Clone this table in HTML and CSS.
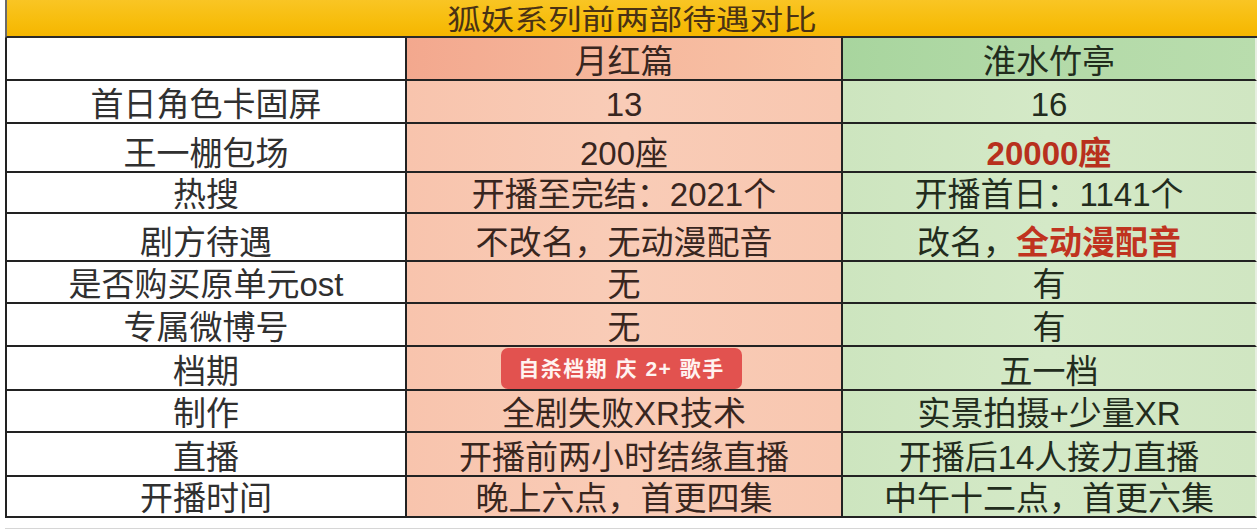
FILE: index.html
```html
<!DOCTYPE html>
<html lang="zh-CN">
<head>
<meta charset="utf-8">
<title>狐妖系列前两部待遇对比</title>
<link rel="stylesheet" href="styles.css">
</head>
<body>
<div class="sheet">
  <div class="title"><span class="title-text">狐妖系列前两部待遇对比</span></div>
  <div class="grid">
    <div class="cell label split-cell"><span class="split-a"></span><span class="split-b"></span></div>
    <div class="cell pink head">月红篇</div>
    <div class="cell green head">淮水竹亭</div>

    <div class="cell label">首日角色卡固屏</div>
    <div class="cell pink">13</div>
    <div class="cell green">16</div>

    <div class="cell label">王一棚包场</div>
    <div class="cell pink">200座</div>
    <div class="cell green"><span class="red bold">20000座</span></div>

    <div class="cell label">热搜</div>
    <div class="cell pink">开播至完结：2021个</div>
    <div class="cell green">开播首日：1141个</div>

    <div class="cell label">剧方待遇</div>
    <div class="cell pink">不改名，无动漫配音</div>
    <div class="cell green">改名，<span class="red semi">全动漫配音</span></div>

    <div class="cell label">是否购买原单元ost</div>
    <div class="cell pink">无</div>
    <div class="cell green">有</div>

    <div class="cell label">专属微博号</div>
    <div class="cell pink">无</div>
    <div class="cell green">有</div>

    <div class="cell label">档期</div>
    <div class="cell pink badge-cell"><span class="badge">自杀档期 庆 2+ 歌手</span></div>
    <div class="cell green">五一档</div>

    <div class="cell label">制作</div>
    <div class="cell pink">全剧失败XR技术</div>
    <div class="cell green">实景拍摄+少量XR</div>

    <div class="cell label">直播</div>
    <div class="cell pink">开播前两小时结缘直播</div>
    <div class="cell green">开播后14人接力直播</div>

    <div class="cell label">开播时间</div>
    <div class="cell pink">晚上六点，首更四集</div>
    <div class="cell green">中午十二点，首更六集</div>
  </div>
  <div class="below"></div>
</div>
</body>
</html>
```
FILE: styles.css
```css
* { box-sizing: border-box; }
html, body { margin: 0; padding: 0; background: #ffffff; }
body {
  width: 1258px;
  height: 529px;
  overflow: hidden;
  font-family: "Liberation Sans", "Noto Sans CJK SC", sans-serif;
  color: #2e2e2e;
}
.sheet {
  margin-left: 5px;
  width: 1252px;
}
.title {
  height: 38px;
  border-left: 2px solid #6a6a6a;
  border-bottom: 2px solid #2a2a2a;
  background: linear-gradient(180deg, #f9c524 0%, #f7bd0c 60%, #f5b600 100%);
  display: flex;
  justify-content: center;
  align-items: flex-end;
  overflow: hidden;
}
.title-text {
  display: inline-block;
  font-size: 28px;
  line-height: 28px;
  color: #4a3214;
  transform: scaleX(1.2);
  margin-bottom: 1px;
}
.grid {
  display: grid;
  grid-template-columns: 400px 436px 414px;
  grid-template-rows: 43px 43px 49px 41px 48px 42px 43px 44px 42px 44px 41px;
  border-left: 2px solid #222222;
}
.cell {
  border-right: 2px solid #222222;
  border-bottom: 2px solid #222222;
  display: flex;
  justify-content: center;
  align-items: flex-end;
  font-size: 33px;
  line-height: 33px;
  padding-bottom: 1px;
  white-space: nowrap;
}
.label { background: #ffffff; color: #303030; }
.pink { background: linear-gradient(90deg, #f8c4ad 0%, #f9ccb7 50%, #f8c7b0 100%); color: #38261f; }
.green { background: linear-gradient(90deg, #cde5bf 0%, #d4e9c7 50%, #d0e6c2 100%); color: #222c1d; border-right-color: #e6eee0; }
.pink.head { background: linear-gradient(90deg, #f3a88e 0%, #f6b89d 50%, #f8c2a6 100%); }
.green.head { background: linear-gradient(90deg, #a8d59e 0%, #b3daa8 50%, #b9ddad 100%); }
.split-cell {
  display: grid;
  grid-template-columns: 161px 1fr;
  padding: 0;
}
.split-a { border-right: 2px solid #222222; }
.red { color: #b8301d; }
.bold { font-weight: 700; }
.semi { font-weight: 700; color: #c0331f; }
.badge-cell { align-items: stretch; padding-bottom: 0; }
.badge {
  display: flex;
  align-items: center;
  justify-content: center;
  width: 241px;
  margin-top: 1px;
  border-radius: 7px;
  background: #e2524f;
  color: #fff3f0;
  font-size: 21px;
  line-height: 21px;
  font-weight: 700;
  letter-spacing: 1.5px;
  margin-left: -5px;
}
.below {
  height: 11px;
  border-bottom: 1px solid #d6d6d6;
  margin-top: 0;
}
```
